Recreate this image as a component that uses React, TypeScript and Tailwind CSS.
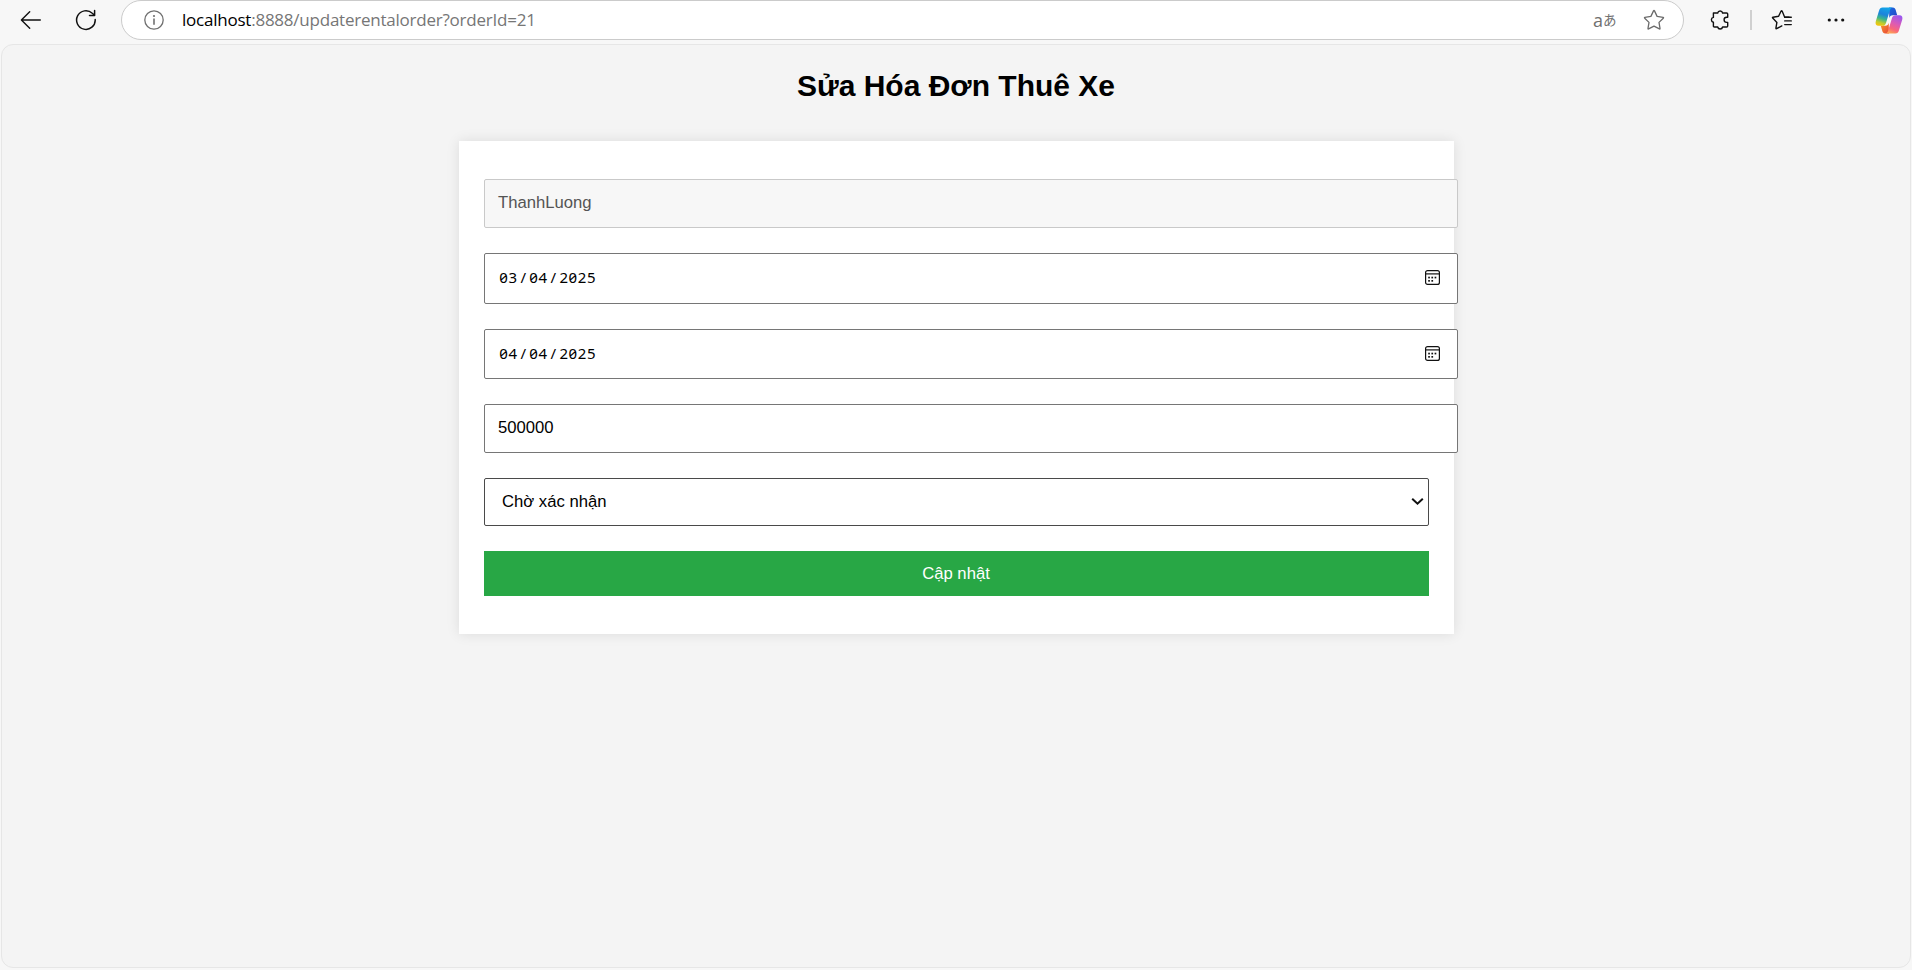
import React from "react";

const fieldBase =
  "ml-[25px] flex w-[974px] items-center rounded-[2px] border px-[13.5px] pb-[2px] text-[16.67px]";

function BackIcon() {
  return (
    <svg width="22" height="20" viewBox="0 0 22 20" fill="none" stroke="#111" strokeWidth="1.4" strokeLinecap="round" strokeLinejoin="round">
      <path d="M20.3 10H1.5M9.7 1.7 1.4 10l8.3 8.3" />
    </svg>
  );
}

function ReloadIcon() {
  return (
    <svg width="22" height="22" viewBox="0 0 22 22" fill="none" stroke="#111" strokeWidth="1.5" strokeLinecap="round" strokeLinejoin="round">
      <path d="M20.2 10.6a9.3 9.3 0 1 1-2.9-6.3l2 1.8" />
      <path d="M19.6 1.4v5.1h-5.1" />
    </svg>
  );
}

function InfoIcon() {
  return (
    <svg width="20" height="20" viewBox="0 0 20 20" fill="none" stroke="#707070" strokeWidth="1.3">
      <circle cx="10" cy="10" r="9.2" />
      <path d="M10 8.6v6.2" strokeWidth="1.6" />
      <circle cx="10" cy="6" r="1.1" fill="#707070" stroke="none" />
    </svg>
  );
}

function StarIcon() {
  return (
    <svg width="22" height="22" viewBox="0 0 22 22" fill="none" stroke="#6b6b6b" strokeWidth="1.3" strokeLinejoin="round">
      <path d="M10.5 1.9q.5-.8 1 0l2.6 5.5 6 .9q.8.2.2.9l-4.3 4.2 1 6q.1.8-.6.5L11 17.1l-5.4 2.8q-.7.3-.6-.5l1-6L1.7 9.2q-.6-.7.2-.9l6-.9Z" />
    </svg>
  );
}

function PuzzleIcon() {
  return (
    <svg width="20" height="22" viewBox="0 0 20 22" fill="none" stroke="#111" strokeWidth="1.4" strokeLinejoin="round">
      <path d="M3.4 4H7.7a2.5 2.5 0 0 1 4.9 0h4q1.1 0 1.1 1.1V8.2h-1a2.6 2.6 0 0 0 0 5.2h1v3.5q0 1.1-1.1 1.1h-4a2.5 2.5 0 0 1-4.9 0H4.5q-1.1 0-1.1-1.1v-3.6a2.5 2.5 0 0 1 0-4.9Z" />
    </svg>
  );
}

function FavoritesIcon() {
  return (
    <svg width="22" height="22" viewBox="0 0 22 22" fill="none" stroke="#111" strokeWidth="1.4" strokeLinecap="round" strokeLinejoin="round">
      <path d="M18 8.2h-4.3L11.1 2q-.5-.8-1 0L7.6 7.3l-5.6.9q-.9.2-.3.9l4.2 4.3-1 5.7q0 .9.7.6l5.2-2.8" />
      <path d="M13.700 8.200h6.600M13.700 11.900h6.600M13.700 15.600h6.600" />
    </svg>
  );
}

function TranslateIcon() {
  return (
    <span className="flex h-5 w-[22px] items-center pb-[1px] text-[#707070]">
      <span className="font-['Open_Sans',sans-serif] text-[18px] leading-none">a</span>
      <span className="font-['Noto_Sans_CJK_JP',sans-serif] text-[13.5px] leading-none">あ</span>
    </span>
  );
}

function CopilotIcon() {
  return (
    <svg width="28" height="27" viewBox="0 0 28 27">
      <defs>
        <linearGradient id="cpLeft" x1="0.6" y1="0" x2="0.3" y2="1">
          <stop offset="0" stopColor="#12a5e8" />
          <stop offset="0.38" stopColor="#1c83dc" />
          <stop offset="0.62" stopColor="#3bb68c" />
          <stop offset="0.85" stopColor="#c3cc2b" />
          <stop offset="1" stopColor="#f2c40c" />
        </linearGradient>
        <linearGradient id="cpRight" x1="0.7" y1="0" x2="0.3" y2="1">
          <stop offset="0" stopColor="#9b57ee" />
          <stop offset="0.45" stopColor="#dc5bb4" />
          <stop offset="0.75" stopColor="#f9667b" />
          <stop offset="1" stopColor="#fda653" />
        </linearGradient>
        <linearGradient id="cpTop" x1="0" y1="0" x2="1" y2="1">
          <stop offset="0" stopColor="#1a6be0" />
          <stop offset="1" stopColor="#2543c4" />
        </linearGradient>
        <linearGradient id="cpBottom" x1="0" y1="0" x2="1" y2="1">
          <stop offset="0" stopColor="#f79a28" />
          <stop offset="1" stopColor="#e8443c" />
        </linearGradient>
      </defs>
      <path d="M14 .5h3.9c1.6 0 2.3.9 2.8 2.5l1.5 5.2h-4.4c-2.2 0-3 1.2-3.5 3Z" fill="url(#cpTop)" />
      <path d="M14 26.5h-3.9c-1.6 0-2.3-.9-2.8-2.5l-1.5-5.2h4.4c2.2 0 3-1.2 3.5-3Z" fill="url(#cpBottom)" />
      <path d="M7.5.5h9.8c-1.4.5-2 1.6-2.5 3.1L11 15.900c-.7 2-1.700 2.900-3.600 2.900H3.600C1 18.800 0 16.800.8 14.200l3.200-10.400C4.700 1.600 5.700.5 7.500.5Z" fill="url(#cpLeft)" />
      <path d="M20.500 26.500h-9.800c1.400-.5 2-1.600 2.500-3.100L17 11.100c.7-2 1.700-2.900 3.600-2.900h3.800c2.600 0 3.600 2 2.800 4.600L24 23.200c-.7 2.200-1.700 3.300-3.500 3.300Z" fill="url(#cpRight)" />
    </svg>
  );
}

function CalendarIcon() {
  return (
    <svg width="15" height="15" viewBox="0 0 15 15" fill="none" stroke="#111" strokeWidth="1.2">
      <rect x="0.6" y="0.6" width="13.8" height="13.8" rx="2" />
      <path d="M.6 3.900h13.800" />
      <g fill="#111" stroke="none">
        <rect x="3.200" y="6.700" width="1.700" height="1.700" />
        <rect x="6.400" y="6.700" width="1.700" height="1.700" />
        <rect x="9.600" y="6.700" width="1.700" height="1.700" />
        <rect x="3.200" y="10" width="1.700" height="1.700" />
        <rect x="6.400" y="10" width="1.700" height="1.700" />
      </g>
    </svg>
  );
}

function DateField({ value, height }: { value: string; height: string }) {
  const [day, month, year] = value.split("/");
  return (
    <div className={`${fieldBase} ${height} justify-between border-[#767676] bg-white pr-[17px]`}>
      <span className="flex font-['Noto_Sans','Open_Sans',sans-serif] text-[15px] leading-none tracking-[0.6px] slashed-zero text-black">
        <span className="px-[1.250px]">{day}</span>
        <span className="w-[9.200px] text-center">/</span>
        <span className="px-[1.250px]">{month}</span>
        <span className="w-[9.200px] text-center">/</span>
        <span className="px-[1.250px]">{year}</span>
      </span>
      <CalendarIcon />
    </div>
  );
}

function Toolbar() {
  return (
    <header className="flex h-[40px] shrink-0 items-center bg-[#f7f7f7]">
      <div className="ml-5 flex w-[55px]">
        <BackIcon />
      </div>
      <div className="flex w-[46px]">
        <ReloadIcon />
      </div>
      <div className="flex h-[40px] w-[1563px] items-center rounded-full border border-[#cbcbcb] bg-white pl-[22px] pr-[18px]">
        <InfoIcon />
        <span className="ml-[18px] pb-[2px] whitespace-nowrap font-['Open_Sans',sans-serif] text-[17px] leading-none tracking-[-0.230px] text-[#767676]">
          <span className="text-black">localhost</span>:8888/updaterentalorder?orderId=21
        </span>
        <span className="ml-auto mr-[28px]">
          <TranslateIcon />
        </span>
        <StarIcon />
      </div>
      <div className="ml-[26px]">
        <PuzzleIcon />
      </div>
      <div className="ml-5 h-5 w-[2px] bg-[#d0d0d0]" />
      <div className="ml-[19px]">
        <FavoritesIcon />
      </div>
      <svg className="ml-[34px]" width="18" height="4" viewBox="0 0 18 4" fill="#111">
        <circle cx="2.300" cy="2" r="1.600" />
        <circle cx="9" cy="2" r="1.600" />
        <circle cx="15.700" cy="2" r="1.600" />
      </svg>
      <div className="ml-auto mr-[9px]">
        <CopilotIcon />
      </div>
    </header>
  );
}

export default function App() {
  return (
    <div className="flex h-[970px] w-[1912px] flex-col overflow-hidden bg-[#f7f7f7] font-['Liberation_Sans',Arial,sans-serif] text-black">
      <Toolbar />
      <main className="mx-px mt-[4px] flex h-[924px] flex-col items-center overflow-hidden rounded-[12px] border border-[#e6e6e6] bg-[#f4f4f4]">
        <h1 className="mt-[23px] text-[30px] leading-[35px] font-bold">Sửa Hóa Đơn Thuê Xe</h1>
        <form className="mt-[38px] flex h-[493px] w-[995px] flex-col bg-white pt-[38px] shadow-[0_0_12.5px_rgba(0,0,0,0.1)]">
          <div className={`${fieldBase} h-[49px] border-[#c9c9c9] bg-[#f7f7f7] text-[#545454]`}>
            ThanhLuong
          </div>
          <div className="h-[25px]" />
          <DateField value="03/04/2025" height="h-[51px]" />
          <div className="h-[25px]" />
          <DateField value="04/04/2025" height="h-[50px]" />
          <div className="h-[25px]" />
          <div className={`${fieldBase} h-[49px] border-[#767676] bg-white`}>500000</div>
          <div className="h-[25px]" />
          <div className="ml-[25px] flex h-[48px] w-[945px] items-center justify-between rounded-[2px] border border-[#4a4a4a] bg-white pb-[1px] pl-[17.5px] pr-[4px] text-[16.67px]">
            <span>Chờ xác nhận</span>
            <svg width="13" height="9" viewBox="0 0 13 9" fill="none" stroke="#111" strokeWidth="2">
              <path d="m1.200 1.700 5.300 5 5.300-5" />
            </svg>
          </div>
          <button
            type="button"
            className="mt-[25px] ml-[25px] h-[45px] w-[945px] bg-[#28a745] pb-[1px] text-[16.67px] text-white"
          >
            Cập nhật
          </button>
        </form>
      </main>
    </div>
  );
}
